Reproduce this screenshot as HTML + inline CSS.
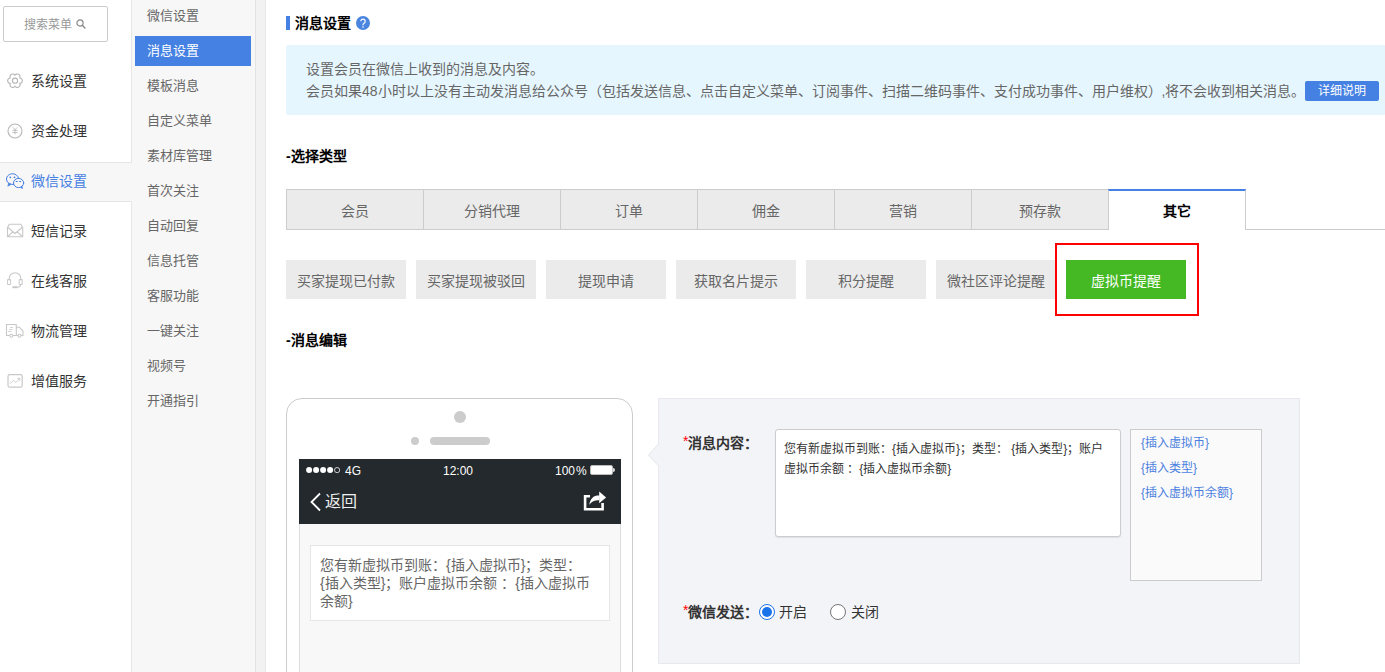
<!DOCTYPE html>
<html lang="zh-CN"><head><meta charset="utf-8">
<style>
*{margin:0;padding:0;box-sizing:border-box}
html,body{width:1385px;height:672px;overflow:hidden;background:#fff;font-family:"Liberation Sans",sans-serif;color:#333}
.a{position:absolute;white-space:nowrap}
#side{position:absolute;left:0;top:0;width:132px;height:672px;background:#fff;border-right:1px solid #e6e6e6}
.srch{position:absolute;left:3px;top:6px;width:105px;height:36px;border:1px solid #ccc;border-radius:2px;font-size:12px;color:#999;line-height:36px;padding-left:20px}
.mi{position:absolute;left:0;width:132px;height:38px;font-size:14px;color:#333;line-height:38px}
.mi span{position:absolute;left:31px;top:0}
.mi svg{position:absolute;left:6px;top:11px}
.mi.on{background:#f7f7f7;border-top:1px solid #e6e6e6;border-bottom:1px solid #e6e6e6;width:133px;height:40px;color:#4680e2;line-height:36px}
#sub{position:absolute;left:132px;top:0;width:123px;height:672px;background:#f7f7f7}
.si{position:absolute;left:15px;font-size:13px;color:#666;line-height:16px}
.hl{position:absolute;left:3px;top:36px;width:116px;height:30px;background:#4581e3}
#strip{position:absolute;left:255px;top:0;width:11px;height:672px;background:#f2f2f2;border-left:1px solid #e3e3e3;border-right:1px solid #e8e8e8}
.tab{position:absolute;top:189px;width:138px;height:41px;background:#ebebeb;border:1px solid #ccc;font-size:14px;color:#666;text-align:center;line-height:42px}
.btn{position:absolute;top:260px;width:120px;height:39px;background:#ebebeb;font-size:14px;color:#666;text-align:center;line-height:42px}
</style></head><body>
<div id="side">
  <div class="srch">搜索菜单<svg style="position:absolute;left:72px;top:12px" width="10" height="10" viewBox="0 0 10 10"><circle cx="4" cy="4" r="3.1" fill="none" stroke="#888" stroke-width="1.2"/><line x1="6.3" y1="6.3" x2="8.9" y2="8.9" stroke="#888" stroke-width="1.4" stroke-linecap="round"/></svg></div>
  <div class="mi" style="top:62px"><span>系统设置</span></div>
  <div class="mi" style="top:112px"><span>资金处理</span></div>
  <div class="mi on" style="top:162px"><span>微信设置</span></div>
  <div class="mi" style="top:212px"><span>短信记录</span></div>
  <div class="mi" style="top:262px"><span>在线客服</span></div>
  <div class="mi" style="top:312px"><span>物流管理</span></div>
  <div class="mi" style="top:362px"><span>增值服务</span></div>
  <svg style="position:absolute;left:0;top:0" width="40" height="400" viewBox="0 0 40 400" fill="none" stroke-linejoin="round" stroke-linecap="round">
   <g stroke="#b5b5b5" stroke-width="1.1">
    <path transform="translate(6.5,72.2)" d="M15.85,8.50 L15.82,8.88 L15.74,9.26 L15.61,9.63 L15.42,9.97 L15.18,10.29 L14.90,10.58 L14.57,10.83 L14.19,11.03 L13.75,11.18 L13.13,11.18 L13.44,11.71 L13.54,12.16 L13.55,12.59 L13.50,13.00 L13.39,13.39 L13.23,13.76 L13.03,14.09 L12.78,14.39 L12.49,14.65 L12.18,14.87 L11.83,15.03 L11.46,15.15 L11.08,15.22 L10.69,15.23 L10.29,15.18 L9.90,15.08 L9.52,14.92 L9.15,14.69 L8.81,14.39 L8.50,13.85 L8.19,14.39 L7.85,14.69 L7.48,14.92 L7.10,15.08 L6.71,15.18 L6.31,15.23 L5.92,15.22 L5.54,15.15 L5.17,15.03 L4.83,14.87 L4.51,14.65 L4.22,14.39 L3.97,14.09 L3.77,13.76 L3.61,13.39 L3.50,13.00 L3.45,12.59 L3.46,12.16 L3.56,11.71 L3.87,11.18 L3.25,11.18 L2.81,11.03 L2.43,10.83 L2.10,10.58 L1.82,10.29 L1.58,9.97 L1.39,9.63 L1.26,9.26 L1.18,8.88 L1.15,8.50 L1.18,8.12 L1.26,7.74 L1.39,7.37 L1.58,7.03 L1.82,6.71 L2.10,6.42 L2.43,6.17 L2.81,5.97 L3.25,5.82 L3.87,5.82 L3.56,5.29 L3.46,4.84 L3.45,4.41 L3.50,4.00 L3.61,3.61 L3.77,3.24 L3.97,2.91 L4.22,2.61 L4.51,2.35 L4.82,2.13 L5.17,1.97 L5.54,1.85 L5.92,1.78 L6.31,1.77 L6.71,1.82 L7.10,1.92 L7.48,2.08 L7.85,2.31 L8.19,2.61 L8.50,3.15 L8.81,2.61 L9.15,2.31 L9.52,2.08 L9.90,1.92 L10.29,1.82 L10.69,1.77 L11.08,1.78 L11.46,1.85 L11.83,1.97 L12.18,2.13 L12.49,2.35 L12.78,2.61 L13.03,2.91 L13.23,3.24 L13.39,3.61 L13.50,4.00 L13.55,4.41 L13.54,4.84 L13.44,5.29 L13.13,5.82 L13.75,5.82 L14.19,5.97 L14.57,6.17 L14.90,6.42 L15.18,6.71 L15.42,7.03 L15.61,7.37 L15.74,7.74 L15.82,8.12Z"/>
    <circle cx="15" cy="80.7" r="2.6"/>
    <circle cx="15" cy="131" r="7"/>
    <path d="M12.6 127.3L15 129.6 17.4 127.3M15 129.6V134.4M12.4 130.4H17.6M12.4 132.5H17.6" stroke-width="0.8" stroke-linecap="butt" stroke-linejoin="miter"/>
   </g>
   <g stroke="#c8c8c8" stroke-width="1.1">
    <path d="M9.3 224.3h11.4l2 3.3v9.2H7.5v-9.2z"/>
    <path d="M8 227.5l7 6 7-6M7.8 236.5l5-4.6M22.2 236.5l-5-4.6"/>
    <path d="M9.2 280v-1.5a5.8 5.8 0 0 1 11.6 0V280"/>
    <rect x="8" y="279.5" width="2.6" height="5" stroke-width="1"/>
    <rect x="19.6" y="279.5" width="2.6" height="5" stroke-width="1"/>
    <path d="M20.5 284.8c0 1.5-1 2.4-3 2.4"/>
    <rect x="12.4" y="286.2" width="5" height="2" fill="#c8c8c8" stroke="none"/>
    <path d="M6.5 324.5h9.8v11H6.5z M16.3 327.3h3.2l3.5 3.8v4.4h-6.7"/>
    <path d="M10.5 327.5h2M9.5 329.5h2.5M8.5 331.5h2.5" stroke-width="0.8"/>
    <circle cx="11.3" cy="335.8" r="1.5" fill="#fff"/>
    <circle cx="19.5" cy="335.8" r="1.5" fill="#fff"/>
    <rect x="8" y="374.6" width="14.2" height="12.6" rx="1.8" stroke-width="1.2"/>
    <path d="M10.3 383.5l3.2-3.3 2.2 2.3 3.8-3.8M17.6 378.3h2.2v2.2" stroke-width="0.9"/>
   </g>
   <g stroke="#4680e2" stroke-width="1">
    <path d="M18.6 178.4A6.1 5.4 0 1 0 13.8 184.4"/>
    <path d="M8.6 183.3L7.8 186.2 10.9 184.6z" fill="#4680e2" stroke-width=".6"/>
    <ellipse cx="18.6" cy="183" rx="5.1" ry="4.6"/>
    <path d="M20.8 187.3L22.3 188.9 22.1 186.3z" fill="#4680e2" stroke-width=".6"/>
    <circle cx="10.3" cy="177.3" r=".9" fill="#4680e2" stroke="none"/>
    <circle cx="14.5" cy="177.3" r=".9" fill="#4680e2" stroke="none"/>
    <path d="M16.2 181.5h1M19.6 181.5h1" stroke-width="1.2"/>
   </g>
  </svg>
</div>
<div id="sub">
  <div class="hl"></div>
  <div class="si" style="top:8px">微信设置</div>
  <div class="si" style="top:43px;color:#fff">消息设置</div>
  <div class="si" style="top:78px">模板消息</div>
  <div class="si" style="top:113px">自定义菜单</div>
  <div class="si" style="top:148px">素材库管理</div>
  <div class="si" style="top:183px">首次关注</div>
  <div class="si" style="top:218px">自动回复</div>
  <div class="si" style="top:253px">信息托管</div>
  <div class="si" style="top:288px">客服功能</div>
  <div class="si" style="top:323px">一键关注</div>
  <div class="si" style="top:358px">视频号</div>
  <div class="si" style="top:393px">开通指引</div>
</div>
<div id="strip"></div>

<!-- header -->
<div class="a" style="left:286px;top:16px;width:4px;height:14px;background:#4581e3"></div>
<div class="a" style="left:295px;top:14px;font-size:14px;font-weight:600;color:#000;line-height:18px">消息设置</div>
<svg class="a" style="left:356px;top:16px" width="14" height="14" viewBox="0 0 14 14"><circle cx="7" cy="7" r="7" fill="#4a86e0"/><path d="M4.8 5.3a2.2 2.2 0 1 1 3.3 1.9c-.7.4-1.1.8-1.1 1.6v.5" fill="none" stroke="#fff" stroke-width="1.2"/><circle cx="7" cy="11" r=".8" fill="#fff"/></svg>

<!-- info -->
<div class="a" style="left:286px;top:45px;width:1100px;height:70px;background:#e6f6fe;border-radius:2px"></div>
<div class="a" style="left:306px;top:58px;font-size:14px;color:#666;line-height:22px">设置会员在微信上收到的消息及内容。<br>会员如果48小时以上没有主动发消息给公众号（包括发送信息、点击自定义菜单、订阅事件、扫描二维码事件、支付成功事件、用户维权）,将不会收到相关消息。</div>
<div class="a" style="left:1305px;top:81px;width:74px;height:20px;background:#4581e3;border-radius:2px;color:#fff;font-size:12px;text-align:center;line-height:20px">详细说明</div>

<div class="a" style="left:286px;top:147px;font-size:14px;font-weight:bold;color:#000;line-height:18px">-选择类型</div>

<!-- tabs -->
<div class="a" style="left:1245px;top:229px;width:140px;height:1px;background:#ccc"></div>
<div class="tab" style="left:286px">会员</div>
<div class="tab" style="left:423px">分销代理</div>
<div class="tab" style="left:560px">订单</div>
<div class="tab" style="left:697px">佣金</div>
<div class="tab" style="left:834px">营销</div>
<div class="tab" style="left:971px">预存款</div>
<div class="tab" style="left:1108px;background:#fff;border-top:2px solid #4581e3;border-bottom:none;color:#000;font-weight:bold;line-height:41px">其它</div>

<!-- sub buttons -->
<div class="btn" style="left:286px">买家提现已付款</div>
<div class="btn" style="left:416px">买家提现被驳回</div>
<div class="btn" style="left:546px">提现申请</div>
<div class="btn" style="left:676px">获取名片提示</div>
<div class="btn" style="left:806px">积分提醒</div>
<div class="btn" style="left:936px">微社区评论提醒</div>
<div class="btn" style="left:1066px;background:#44b923;color:#fff">虚拟币提醒</div>
<div class="a" style="left:1055px;top:243px;width:144px;height:73px;border:2px solid #f00"></div>

<div class="a" style="left:286px;top:331px;font-size:14px;font-weight:bold;color:#000;line-height:18px">-消息编辑</div>

<!-- phone -->
<div class="a" style="left:286px;top:398px;width:347px;height:300px;border:1px solid #ccc;border-radius:16px;background:#fff"></div>
<div class="a" style="left:454px;top:411px;width:12px;height:12px;border-radius:50%;background:#ccc"></div>
<div class="a" style="left:411px;top:437px;width:8px;height:8px;border-radius:50%;background:#ccc"></div>
<div class="a" style="left:430px;top:437px;width:60px;height:8px;border-radius:4px;background:#ccc"></div>
<div class="a" style="left:299px;top:459px;width:322px;height:65px;background:#23292c"></div>
<div class="a" style="left:299px;top:524px;width:322px;height:160px;background:#f8f8f8;border-left:1px solid #ddd;border-right:1px solid #ddd"></div>
<svg class="a" style="left:300px;top:463px" width="45" height="14" viewBox="300 463 45 14"><g fill="#fff"><circle cx="309.1" cy="470.1" r="3"/><circle cx="316.1" cy="470.1" r="3"/><circle cx="323.1" cy="470.1" r="3"/><circle cx="330.1" cy="470.1" r="3"/></g><circle cx="337.1" cy="470.1" r="2.6" fill="none" stroke="#ddd" stroke-width="0.9"/></svg><div class="a" style="left:345px;top:463px;font-size:12px;color:#fff;line-height:16px">4G</div>
<div class="a" style="left:443px;top:463px;font-size:12px;color:#fff;line-height:16px">12:00</div>
<div class="a" style="left:555px;top:463px;font-size:12px;color:#fff;line-height:16px">100<span style="margin-left:1px">%</span></div>
<div class="a" style="left:590px;top:465px;width:23px;height:10px;background:#fff;border:1px solid #bbb;border-radius:2px"></div>
<div class="a" style="left:613px;top:468px;width:2px;height:4px;background:#ddd;border-radius:0 2px 2px 0"></div>
<svg class="a" style="left:309px;top:492px" width="14" height="20" viewBox="0 0 14 20"><path d="M11 1.5L2.5 10 11 18.5" fill="none" stroke="#fff" stroke-width="1.8"/></svg>
<div class="a" style="left:325px;top:492px;font-size:16px;color:#eee;line-height:20px">返回</div>
<svg class="a" style="left:578px;top:486px" width="34" height="30" viewBox="0 0 34 30"><path d="M12 10.2H7.1V23.3H24.6V17" fill="none" stroke="#fff" stroke-width="2.6"/><path d="M21.2 5.6L28.1 11.4 21.2 17.2z M21.2 9.2C15 9.2 12.4 13 11.2 18.9C13.5 15.5 16.5 14.3 21.4 14.3z" fill="#fff"/></svg>
<div class="a" style="left:310px;top:545px;width:300px;height:76px;background:#fff;border:1px solid #e6e6e6"></div>
<div class="a" style="left:320px;top:556px;width:282px;white-space:normal;font-size:14px;color:#666;line-height:18px">您有新虚拟币到账：{插入虚拟币}；类型： {插入类型}；账户虚拟币余额 ：{插入虚拟币余额}</div>

<!-- right panel -->
<div class="a" style="left:658px;top:398px;width:642px;height:266px;background:#f3f4f8;border:1px solid #e8e8ee"></div>
<svg class="a" style="left:647px;top:442px" width="13" height="26" viewBox="0 0 13 26"><path d="M12 1.5L1.5 13 12 24.5z" fill="#f3f4f8"/><path d="M12 1.5L1.5 13 12 24.5" fill="none" stroke="#e6e6ec" stroke-width="1"/></svg>
<div class="a" style="left:683px;top:434px;font-size:14px;font-weight:bold;color:#333;line-height:18px"><span style="color:#f00;font-weight:normal;position:relative;top:-2px">*</span>消息内容：</div>
<div class="a" style="left:775px;top:429px;width:346px;height:108px;background:#fff;border:1px solid #ccc;border-radius:3px;box-shadow:0 1px 1px rgba(0,0,0,.08)"></div>
<div class="a" style="left:784px;top:439px;width:330px;white-space:normal;font-size:12px;color:#333;line-height:20px">您有新虚拟币到账：{插入虚拟币}；类型： {插入类型}；账户虚拟币余额 ：{插入虚拟币余额}</div>
<div class="a" style="left:1130px;top:429px;width:132px;height:152px;background:#fafafa;border:1px solid #ccc"></div>
<div class="a" style="left:1141px;top:431px;font-size:12px;color:#4a7fe0;line-height:25px">{插入虚拟币}<br>{插入类型}<br>{插入虚拟币余额}</div>
<div class="a" style="left:683px;top:603px;font-size:14px;font-weight:bold;color:#333;line-height:18px"><span style="color:#f00;font-weight:normal;position:relative;top:-2px">*</span>微信发送：</div>
<div class="a" style="left:759px;top:604px;width:16px;height:16px;border-radius:50%;border:1px solid #1a73e8;background:#fff"></div>
<div class="a" style="left:762px;top:607px;width:10px;height:10px;border-radius:50%;background:#1a73e8"></div>
<div class="a" style="left:779px;top:603px;font-size:14px;color:#333;line-height:18px">开启</div>
<div class="a" style="left:830px;top:604px;width:16px;height:16px;border-radius:50%;border:1px solid #767676;background:#fff"></div>
<div class="a" style="left:851px;top:603px;font-size:14px;color:#333;line-height:18px">关闭</div>
</body></html>
